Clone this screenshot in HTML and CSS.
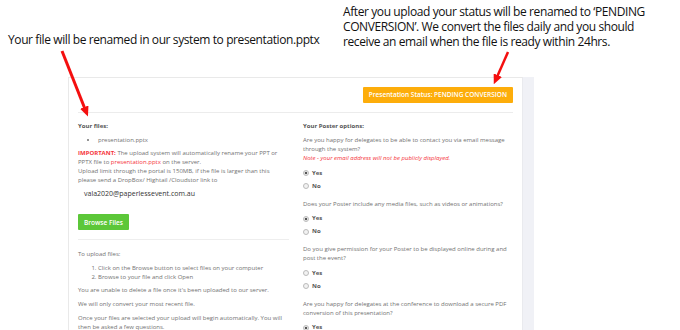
FILE: index.html
```html
<!DOCTYPE html>
<html lang="en">
<head>
    <meta charset="UTF-8">
    <title>Presentation upload notes</title>
    <link rel="stylesheet" href="styles.css">
</head>
<body>
    <div class="slide">
        <div class="notes">
            <p class="note note-left">Your file will be renamed in our system to presentation.pptx</p>
            <p class="note note-right">After you upload your status will be renamed to &lsquo;PENDING CONVERSION&rsquo;. We convert the files daily and you should receive an email when the file is ready within 24hrs.</p>
        </div>

        <div class="shot">
            <div class="panel">
                <div class="panel-head">
                    <span class="badge">Presentation Status: PENDING CONVERSION</span>
                </div>
                <div class="cols">
                    <!-- Files column -->
                    <div class="col">
                        <p class="label">Your files:</p>
                        <ul class="files">
                            <li>presentation.pptx</li>
                        </ul>
                        <p class="txt"><b class="red">IMPORTANT:</b> The upload system will automatically rename your PPT or PPTX file to <span class="red">presentation.pptx</span> on the server.<br>Upload limit through the portal is 150MB, if the file is larger than this please send a DropBox/ Hightail /Cloudstor link to</p>
                        <p class="email">vala2020@paperlessevent.com.au</p>
                        <button class="btn-browse">Browse Files</button>
                        <hr class="rule">
                        <p class="txt">To upload files:</p>
                        <ol class="steps">
                            <li>Click on the Browse button to select files on your computer</li>
                            <li>Browse to your file and click Open</li>
                        </ol>
                        <p class="txt">You are unable to delete a file once it's been uploaded to our server.</p>
                        <p class="txt">We will only convert your most recent file.</p>
                        <p class="txt">Once your files are selected your upload will begin automatically. You will then be asked a few questions.</p>
                    </div>

                    <!-- Options column -->
                    <div class="col">
                        <p class="label">Your Poster options:</p>
                        <p class="q">Are you happy for delegates to be able to contact you via email message through the system?<br><em class="red">Note - your email address will not be publicly displayed.</em></p>
                        <div class="radios">
                            <label class="radio"><span class="dot on"></span>Yes</label>
                            <label class="radio"><span class="dot"></span>No</label>
                        </div>
                        <p class="q">Does your Poster include any media files, such as videos or animations?</p>
                        <div class="radios">
                            <label class="radio"><span class="dot on"></span>Yes</label>
                            <label class="radio"><span class="dot"></span>No</label>
                        </div>
                        <p class="q">Do you give permission for your Poster to be displayed online during and post the event?</p>
                        <div class="radios">
                            <label class="radio"><span class="dot"></span>Yes</label>
                            <label class="radio"><span class="dot"></span>No</label>
                        </div>
                        <p class="q">Are you happy for delegates at the conference to download a secure PDF conversion of this presentation?</p>
                        <div class="radios">
                            <label class="radio"><span class="dot on"></span>Yes</label>
                        </div>
                    </div>
                </div>
            </div>
            <div class="gutter"></div>
        </div>

        <!-- Callout arrows -->
        <svg class="arrows" viewBox="0 0 680 330">
            <defs>
                <marker id="head" markerUnits="userSpaceOnUse" markerWidth="10" markerHeight="9"
                refX="2" refY="4.5" orient="auto">
                    <polygon points="0 0, 10 4.5, 0 9" fill="#f40f0f"/>
                </marker>
            </defs>
            <path class="arrow" d="M62,51 L85,109"/>
            <path class="arrow thin" d="M508,52 L497,77"/>
        </svg>
    </div>
</body>
</html>
```

FILE: styles.css
```css
* {
    box-sizing: border-box;
}
body {
    margin: 0;
    background: #fff;
    font-family: "Open Sans", sans-serif;
}
.slide {
    position: relative;
    width: 680px;
    height: 330px;
    overflow: hidden;
}
p {
    margin: 0;
}
.notes {
    display: flex;
    height: 77px;
}
.note {
    font-family: "Open Sans", sans-serif;
    font-size: 12px;
    line-height: 15px;
    letter-spacing: -0.4px;
    color: #111;
}
.note-left {
    width: 335px;
    margin: 32px 0 0 8px;
}
.note-right {
    width: 318px;
    margin: 4px 0 0 0;
}
.shot {
    display: flex;
    margin-left: 68px;
    width: 466px;
    height: 253px;
}
.panel {
    width: 455px;
    background: #fff;
    border-left: 1px solid #e9e9e9;
    border-top: 1px solid #e9e9e9;
    border-right: 1px solid #e9eaee;
    padding: 9px 9px 0 9px;
}
.gutter {
    flex: 1;
    background: #f0f1f6;
}
.panel-head {
    display: flex;
    justify-content: flex-end;
    padding-bottom: 9px;
    border-bottom: 1px solid #ececec;
}
.badge {
    display: block;
    height: 16px;
    line-height: 16px;
    padding: 0 6px;
    background: #fdad0a;
    border-radius: 1px;
    color: #fff;
    font-size: 6.5px;
    font-weight: 600;
}
.cols {
    display: grid;
    grid-template-columns: 211px 211px;
    column-gap: 14px;
    padding-top: 9px;
}
.col {
    font-size: 6px;
    line-height: 9px;
    color: #727272;
}
.label {
    font-weight: 700;
    color: #555;
    margin-bottom: 5px;
}
.files {
    margin: 0 0 4px;
    padding-left: 20px;
}
.txt {
    margin-bottom: 5px;
}
.red {
    color: #f5333a;
}
.email {
    margin: -1px 0 0 6px;
    font-size: 7px;
    line-height: 10px;
    color: #333;
}
.btn-browse {
    display: block;
    margin-top: 15px;
    height: 16px;
    padding: 0 6px;
    border: 0;
    border-radius: 1px;
    background: #5cc739;
    color: #fff;
    font-family: "Open Sans", sans-serif;
    font-size: 6.5px;
    font-weight: 600;
}
.rule {
    margin: 9px 0 10px;
    border: 0;
    border-top: 1px solid #eee;
}
.steps {
    margin: 0 0 4px;
    padding-left: 20px;
}
.q {
    margin-bottom: 3.5px;
}
.q em {
    font-style: italic;
}
.radios {
    margin-bottom: 7px;
}
.radio {
    display: flex;
    align-items: center;
    height: 13px;
    font-weight: 700;
    color: #555;
}
.dot {
    width: 6px;
    height: 6px;
    margin-right: 3px;
    border: 1px solid #bbb;
    border-radius: 50%;
    background: #f2f2f2;
}
.dot.on {
    background: radial-gradient(circle, #555 0 1.4px, #f2f2f2 1.6px);
}
.arrows {
    position: absolute;
    left: 0;
    top: 0;
    width: 680px;
    height: 330px;
    pointer-events: none;
}
.arrow {
    stroke: #f40f0f;
    stroke-width: 3;
    fill: none;
    marker-end: url(#head);
}
.arrow.thin {
    stroke-width: 2.5;
}
```
